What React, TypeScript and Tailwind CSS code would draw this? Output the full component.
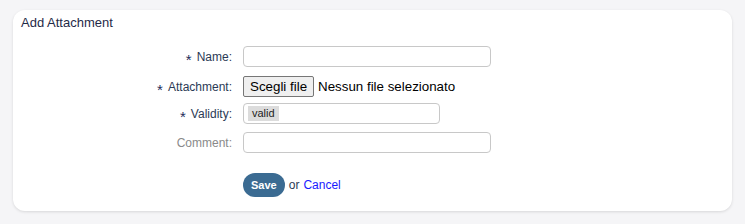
import React from 'react';

function Label({ text, required, muted }: { text: string; required?: boolean; muted?: boolean }) {
  return (
    <div className={'flex w-[219px] shrink-0 items-center justify-end gap-[5px] text-[12px] ' + (muted ? 'text-[#8a8a8a]' : 'text-[#2b3a55]')}>
      {required && <span className="translate-y-[3px] text-[15px] leading-none text-[#1f2d5a]">*</span>}
      <span>{text}:</span>
    </div>
  );
}

export default function App() {
  return (
    <div className="min-h-[224px] bg-[#f5f5f7] px-[13px] pt-[10px] pb-[13px]" style={{ fontFamily: '"Liberation Sans", Arial, sans-serif' }}>
      <section className="h-[201px] rounded-[12px] bg-white shadow-[0_1px_3px_rgba(0,0,0,0.12)]">
        <h2 className="pl-[8px] pt-[5px] text-[13px] leading-[16px] text-[#1f2a48]">Add Attachment</h2>
        <div className="mt-[15px] flex flex-col">
          <div className="flex h-[21px] items-center gap-[11px]">
            <Label text="Name" required />
            <input type="text" className="h-[21px] w-[248px] rounded-[4px] border border-[#c8c8c8] bg-white outline-none" />
          </div>

          <div className="mt-[9px] flex h-[21px] items-center gap-[11px]">
            <Label text="Attachment" required />
            <div className="flex items-center gap-[4px]">
              <button className="h-[21px] rounded-[2px] border border-[#767676] bg-[#efefef] px-[6px] text-[13.33px] leading-[18px] text-black">
                Scegli file
              </button>
              <span className="text-[13.33px] leading-[21px] text-black">Nessun file selezionato</span>
            </div>
          </div>

          <div className="mt-[6px] flex h-[21px] items-center gap-[11px]">
            <Label text="Validity" required />
            <div className="flex h-[21px] w-[197px] items-center rounded-[4px] border border-[#c8c8c8] bg-white pl-[4px]">
              <span className="bg-[#dcdcdc] px-[4px] text-[11px] leading-[15px] text-[#222]">valid</span>
            </div>
          </div>

          <div className="mt-[8px] flex h-[21px] items-center gap-[11px]">
            <Label text="Comment" muted />
            <input type="text" className="h-[21px] w-[248px] rounded-[4px] border border-[#c8c8c8] bg-white outline-none" />
          </div>

          <div className="mt-[20px] flex h-[24px] items-center gap-[11px]">
            <div className="w-[219px] shrink-0" />
            <div className="flex items-center gap-[4px] text-[12px]">
              <button className="h-[24px] rounded-full bg-[#3b6b92] px-[8px] text-[11px] font-bold text-white">Save</button>
              <span className="text-[#2b3a55]">or</span>
              <a href="#" className="text-[#1a1aff]">Cancel</a>
            </div>
          </div>
        </div>
      </section>
    </div>
  );
}
